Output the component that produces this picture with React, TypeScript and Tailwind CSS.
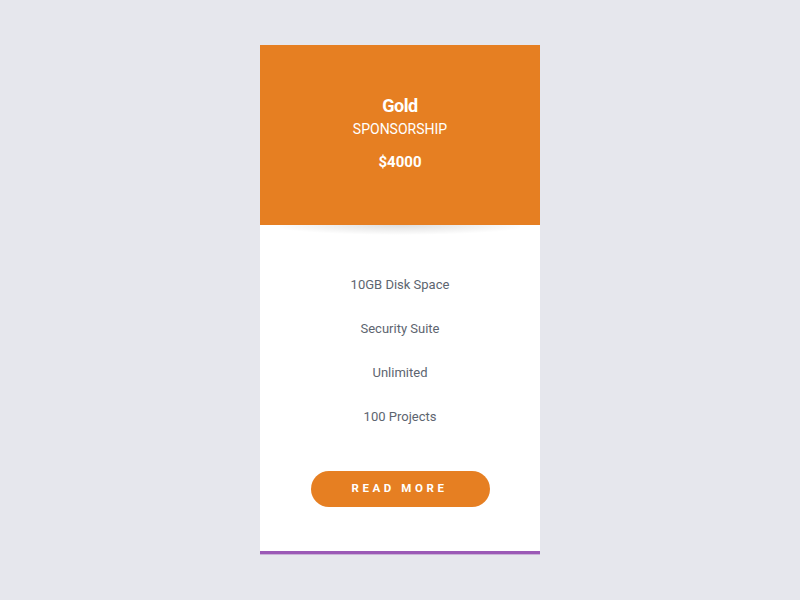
export default function App() {
  const features = ['10GB Disk Space', 'Security Suite', 'Unlimited', '100 Projects']

  return (
    <div className="min-h-screen w-full bg-[#e6e7ed] flex justify-center pt-[45px]" style={{ fontFamily: 'Roboto, "Open Sans", sans-serif' }}>
      <div className="w-[280px] h-[509px] bg-white flex flex-col border-b-[3px] border-[#9b59b6] shadow-[0_1px_0_#c9b2d6]">
        <div className="relative h-[180px] bg-[#e67f22] flex flex-col items-center text-white pt-[51px]">
          <h2 className="text-[18px] font-bold leading-5 tracking-tight">Gold</h2>
          <p className="text-[14px] leading-5 mt-[3px]">SPONSORSHIP</p>
          <p className="text-[15px] font-bold leading-5 mt-[13px]">$4000</p>
          <div className="absolute left-[20px] right-[20px] top-full h-[10px] bg-[radial-gradient(ellipse_55%_100%_at_50%_0%,rgba(0,0,0,0.13),rgba(0,0,0,0)_100%)]" />
        </div>
        <ul className="flex flex-col items-center pt-[51px] gap-[26px] text-[13px] text-[#5d6570] leading-[18px]">
          {features.map((f) => (
            <li key={f}>{f}</li>
          ))}
        </ul>
        <div className="flex justify-center mt-[45px]">
          <button className="w-[179px] h-[36px] rounded-full bg-[#e67f22] text-white text-[11.5px] font-bold tracking-[3.6px] pr-[1px]">
            READ MORE
          </button>
        </div>
      </div>
    </div>
  )
}
